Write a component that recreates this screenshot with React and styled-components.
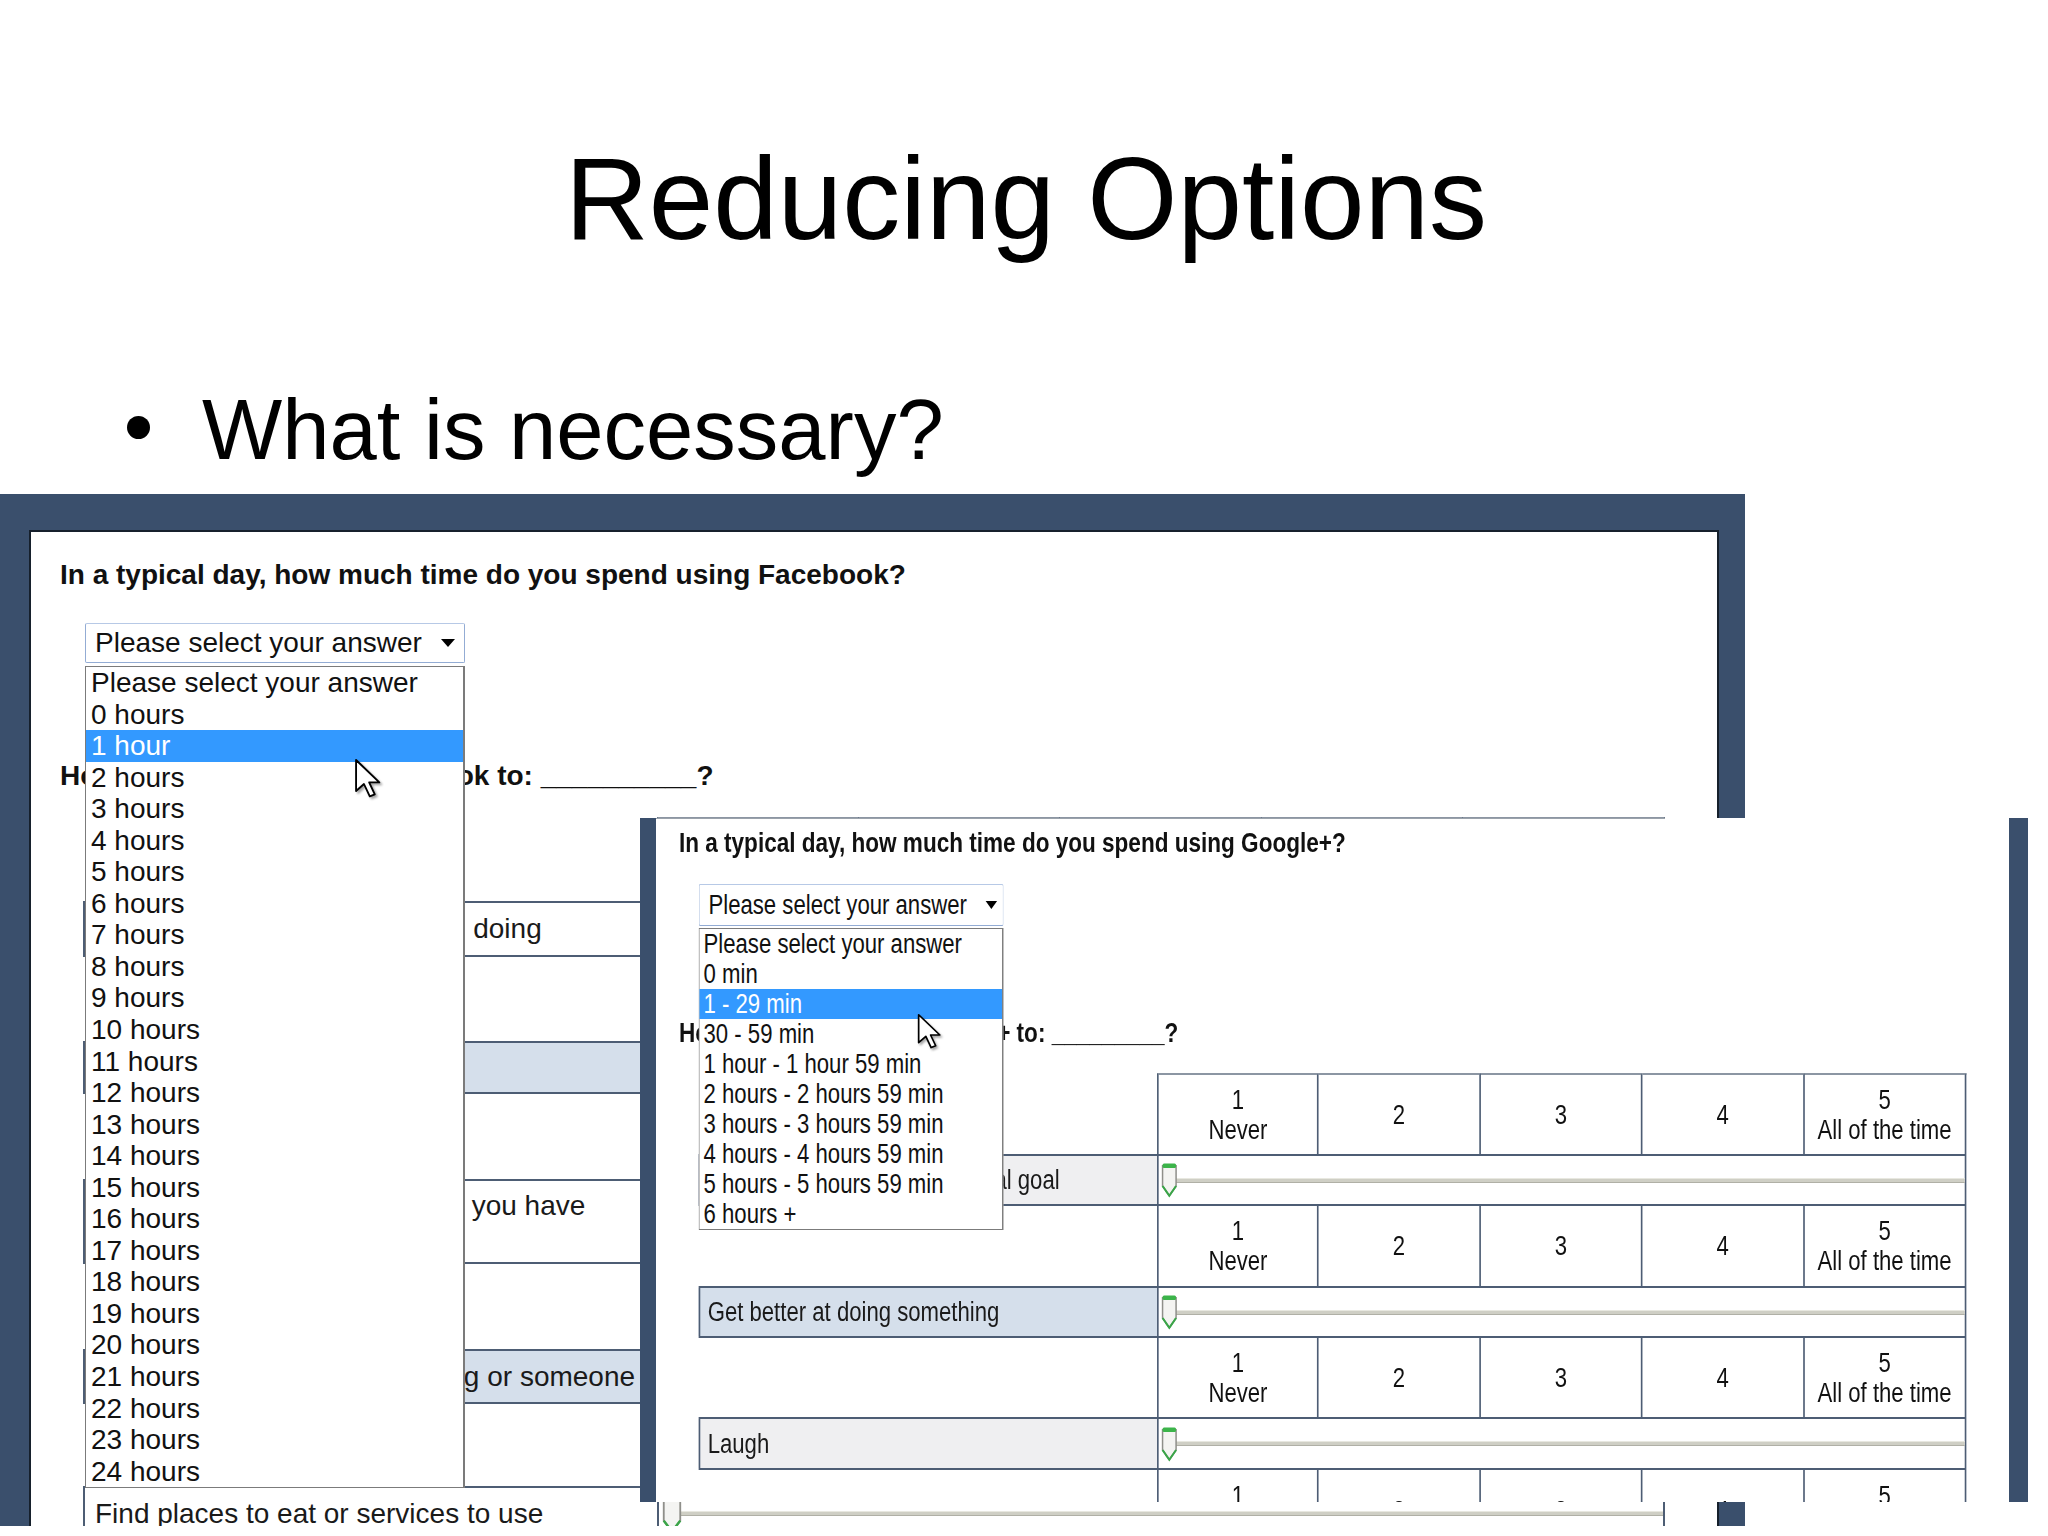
import React from 'react';
import styled, { createGlobalStyle } from 'styled-components';

const GlobalStyle = createGlobalStyle`
  html, body {
    margin: 0;
    padding: 0;
    background: #ffffff;
  }
  body {
    font-family: "Liberation Sans", Arial, sans-serif;
    color: #000;
  }
  * {
    box-sizing: border-box;
  }
`;

const FRAME = '#3a4f6c';
const LINE = '#4d5d74';
const BLUE_ROW = '#d5dfeb';
const GRAY_ROW = '#efeff1';

const Slide = styled.div`
  width: 2048px;
  height: 1536px;
  position: relative;
  overflow: hidden;
  background: #fff;
`;

const Title = styled.h1`
  margin: 0;
  padding: 141px 0 0 4px;
  font-weight: 400;
  font-size: 116px;
  line-height: 116px;
  text-align: center;
  color: #000;
`;

const Bullet = styled.div`
  display: flex;
  align-items: flex-start;
  margin-top: 130px;
  padding-left: 127px;
  font-size: 85px;
  line-height: 85px;
  color: #000;
`;

const Dot = styled.span`
  width: 23px;
  height: 23px;
  border-radius: 50%;
  background: #000;
  margin: 29px 52px 0 0;
  flex: none;
`;

const Shot = styled.div`
  position: relative;
  margin-top: 22px;
  height: 1032px;
`;

const Frame = styled.div`
  position: relative;
  z-index: 1;
  width: 1745px;
  height: 100%;
  background: ${FRAME};
  padding: 36px 26px 0 29px;
`;

const Screen = styled.div`
  height: 100%;
  background: #fff;
  border: 2px solid #16202c;
  border-bottom: none;
  overflow: hidden;
`;

const Overlay = styled.div`
  position: absolute;
  z-index: 5;
  left: 640px;
  top: 324px;
  width: 1388px;
  height: 684px;
  background: ${FRAME};
  padding: 0 19px 0 16px;
`;

const OverlayScreen = styled.div`
  height: 100%;
  background: #fff;
  overflow: hidden;
  &::before {
    content: '';
    display: block;
    width: 1009px;
    height: 1px;
    background: #9aa2ab;
  }
`;

/* the Google+ capture is squeezed sideways in the slide */
const Squash = styled.div`
  width: 1650px;
  transform: scaleX(0.82);
  transform-origin: 0 0;
`;

const FormBody = styled.div`
  padding: ${p => p.$pad};
`;

const Question = styled.div`
  font-weight: 700;
  font-size: ${p => p.$size}px;
  line-height: ${p => p.$lh}px;
  margin-top: ${p => p.$top || 0}px;
  color: #111;
  white-space: nowrap;
`;

const SelectWrap = styled.div`
  position: relative;
  z-index: 2;
  width: ${p => p.$w}px;
  margin: ${p => p.$margin};
`;

const SelectBox = styled.div`
  height: ${p => p.$h}px;
  border: 1px solid #93acd4;
  border-top-color: #b7c9e6;
  border-radius: 2px;
  background: #fff;
  display: flex;
  align-items: center;
  justify-content: space-between;
  padding: ${p => p.$pad};
  font-size: ${p => p.$size}px;
  color: #111;
  white-space: nowrap;
`;

const Caret = styled.span`
  width: 0;
  height: 0;
  border-left: 7px solid transparent;
  border-right: 7px solid transparent;
  border-top: 8px solid #000;
`;

const DropList = styled.ul`
  position: absolute;
  left: 0;
  top: ${p => p.$top}px;
  width: 100%;
  margin: 0;
  padding: 0;
  list-style: none;
  background: #fff;
  border: 1px solid #7b7b7b;
  border-right-width: 2px;
`;

const Option = styled.li`
  height: ${p => p.$h}px;
  line-height: ${p => p.$h}px;
  padding-left: ${p => p.$pad}px;
  font-size: ${p => p.$size}px;
  white-space: nowrap;
  background: ${p => (p.$active ? '#3399ff' : 'transparent')};
  color: ${p => (p.$active ? '#fff' : '#111')};
`;

const Pointer = styled.svg`
  position: absolute;
  left: ${p => p.$x}px;
  top: ${p => p.$y}px;
  filter: drop-shadow(2px 2px 1px rgba(0, 0, 0, 0.35));
`;

const Table = styled.div`
  margin: ${p => p.$margin};
  width: ${p => p.$label + p.$col * 5}px;
`;

const ScaleRow = styled.div`
  display: grid;
  grid-template-columns: ${p => p.$label}px repeat(5, ${p => p.$col}px);
  height: ${p => p.$h}px;
`;

const ScaleCell = styled.div`
  border-right: 2px solid ${LINE};
  border-top: ${p => (p.$first ? `2px solid #8c96a3` : 'none')};
  display: flex;
  flex-direction: column;
  align-items: center;
  justify-content: center;
  font-size: ${p => p.$size}px;
  line-height: ${p => p.$lh}px;
  color: #111;
  white-space: nowrap;
  &:nth-child(2) {
    border-left: 2px solid ${LINE};
  }
`;

const ItemRow = styled.div`
  display: grid;
  grid-template-columns: ${p => p.$label}px 1fr;
  height: ${p => p.$h}px;
  border-top: 2px solid ${LINE};
  border-bottom: 2px solid ${LINE};
`;

const ItemLabel = styled.div`
  background: ${p => p.$bg};
  border-left: 2px solid ${LINE};
  display: flex;
  flex-direction: column;
  justify-content: center;
  padding-left: ${p => p.$pad}px;
  font-size: ${p => p.$size}px;
  line-height: ${p => p.$lh}px;
  color: #1a1a1a;
  white-space: nowrap;
`;

const SliderCell = styled.div`
  display: flex;
  align-items: center;
  border-left: 2px solid ${LINE};
  border-right: 2px solid ${LINE};
  background: #fff;
  padding-left: 2px;
`;

const Handle = styled.svg`
  flex: none;
  position: relative;
  z-index: 1;
`;

const Track = styled.div`
  flex: 1;
  height: 5px;
  margin-left: -3px;
  background: #cfcfc5;
  border-top: 1px solid #e8e8e0;
  border-bottom: 1px solid #b0b0a6;
`;

const FB_OPTIONS = [
  'Please select your answer',
  '0 hours',
  '1 hour',
  ...Array.from({ length: 23 }, (_, i) => `${i + 2} hours`),
];

const GP_OPTIONS = [
  'Please select your answer',
  '0 min',
  '1 - 29 min',
  '30 - 59 min',
  '1 hour - 1 hour 59 min',
  '2 hours - 2 hours 59 min',
  '3 hours - 3 hours 59 min',
  '4 hours - 4 hours 59 min',
  '5 hours - 5 hours 59 min',
  '6 hours +',
];

const SCALE = [['1', 'Never'], ['2'], ['3'], ['4'], ['5', 'All of the time']];

const FB = {
  size: 28,
  lh: 32,
  label: 574,
  col: 201.6,
  pad: 10,
  rows: [
    { head: 84, h: 56, bg: '#fff', text: ['Find out what your friends are doing'] },
    { head: 84, h: 53, bg: BLUE_ROW, text: ['Play games'] },
    { head: 85, h: 85, bg: '#fff', text: ['Stay in contact with all people you have', 'met online'] },
    { head: 85, h: 55, bg: BLUE_ROW, text: ['Get more info about something or someone'] },
    { head: 82, h: 55, bg: '#fff', text: ['Find places to eat or services to use'] },
  ],
};

const GP = {
  size: 27,
  lh: 30,
  label: 559,
  col: 197.4,
  pad: 9,
  rows: [
    { head: 81, h: 52, bg: GRAY_ROW, text: ['Make progress on my personal goal'] },
    { head: 80, h: 52, bg: BLUE_ROW, text: ['Get better at doing something'] },
    { head: 79, h: 53, bg: GRAY_ROW, text: ['Laugh'] },
    { head: 81, h: 52, bg: BLUE_ROW, text: ['Keep up with the news'] },
  ],
};

function Cursor({ x, y, w, h }) {
  return (
    <Pointer $x={x} $y={y} width={w} height={h} viewBox="0 0 13 20" preserveAspectRatio="none">
      <path
        d="M1 1 V16.5 L4.8 13 L7.6 19.2 L10 18.2 L7.3 12.2 H12.2 Z"
        fill="#fff"
        stroke="#000"
        strokeWidth="0.9"
        strokeLinejoin="round"
      />
    </Pointer>
  );
}

function Slider({ w, h }) {
  return (
    <SliderCell>
      <Handle width={w} height={h} viewBox="0 0 12 24" preserveAspectRatio="none">
        <path d="M1.5 2.5 H10.5 V16 L6 22.5 L1.5 16 Z" fill="#f4f4f2" stroke="#8f8f8a" strokeWidth="1" />
        <rect x="1.5" y="1" width="9" height="3" rx="1" fill="#3cb44a" />
        <path d="M1.5 16 L6 22.5 L10.5 16" fill="none" stroke="#3aa548" strokeWidth="1.4" />
      </Handle>
      <Track />
    </SliderCell>
  );
}

function SurveyTable({ spec, margin, handle }) {
  return (
    <Table $margin={margin} $label={spec.label} $col={spec.col}>
      {spec.rows.map((row, i) => (
        <React.Fragment key={i}>
          <ScaleRow $label={spec.label} $col={spec.col} $h={row.head}>
            <span />
            {SCALE.map(lines => (
              <ScaleCell key={lines[0]} $first={i === 0} $size={spec.size} $lh={spec.lh}>
                {lines.map(t => (
                  <span key={t}>{t}</span>
                ))}
              </ScaleCell>
            ))}
          </ScaleRow>
          <ItemRow $label={spec.label} $h={row.h}>
            <ItemLabel $bg={row.bg} $pad={spec.pad} $size={spec.size} $lh={spec.lh}>
              {row.text.map(t => (
                <span key={t}>{t}</span>
              ))}
            </ItemLabel>
            <Slider w={handle.w} h={handle.h} />
          </ItemRow>
        </React.Fragment>
      ))}
    </Table>
  );
}

function App() {
  return (
    <>
      <GlobalStyle />
      <Slide>
        <Title>Reducing Options</Title>
        <Bullet>
          <Dot />
          <span>What is necessary?</span>
        </Bullet>

        <Shot>
          <Frame>
            <Screen>
              <FormBody $pad="26px 0 0 29px">
                <Question $size={28} $lh={34}>
                  In a typical day, how much time do you spend using Facebook?
                </Question>
                <SelectWrap $w={380} $margin="31px 0 0 25px">
                  <SelectBox $h={40} $pad="0 9px 0 9px" $size={28}>
                    <span>Please select your answer</span>
                    <Caret />
                  </SelectBox>
                  <DropList $top={43}>
                    {FB_OPTIONS.map((o, i) => (
                      <Option key={o} $h={31.55} $pad={5} $size={28} $active={i === 2}>
                        {o}
                      </Option>
                    ))}
                    <Cursor x={268} y={91} w={27} h={40} />
                  </DropList>
                </SelectWrap>
                <Question $size={28} $lh={34} $top={96}>
                  How often do you use Facebook to: __________?
                </Question>
                <SurveyTable spec={FB} margin="24px 0 0 23px" handle={{ w: 22, h: 40 }} />
              </FormBody>
            </Screen>
          </Frame>

          <Overlay>
            <OverlayScreen>
              <Squash>
                <FormBody $pad="8px 0 0 28px">
                  <Question $size={27.5} $lh={32}>
                    In a typical day, how much time do you spend using Google+?
                  </Question>
                  <SelectWrap $w={372} $margin="25px 0 0 24px">
                    <SelectBox $h={42} $pad="0 7px 0 11px" $size={27}>
                      <span>Please select your answer</span>
                      <Caret />
                    </SelectBox>
                    <DropList $top={44}>
                      {GP_OPTIONS.map((o, i) => (
                        <Option key={o} $h={30} $pad={5} $size={27} $active={i === 2}>
                          {o}
                        </Option>
                      ))}
                      <Cursor x={265} y={84} w={30} h={36} />
                    </DropList>
                  </SelectWrap>
                  <Question $size={27.5} $lh={32} $top={91}>
                    How often do you use Google+ to: _________?
                  </Question>
                  <SurveyTable spec={GP} margin="24px 0 0 24px" handle={{ w: 22, h: 36 }} />
                </FormBody>
              </Squash>
            </OverlayScreen>
          </Overlay>
        </Shot>
      </Slide>
    </>
  );
}

export default App;
